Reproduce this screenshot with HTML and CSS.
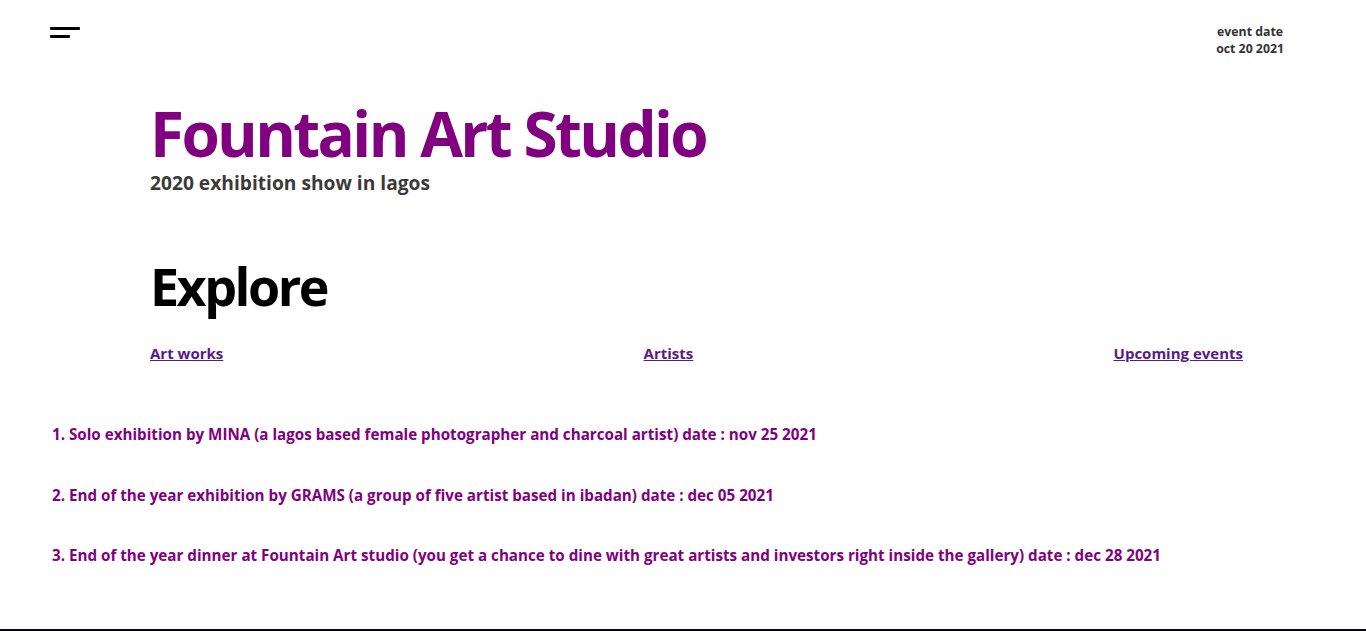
FILE: index.html
```html
<!DOCTYPE html>
<html lang="en">
<head>
<meta charset="utf-8">
<title>Fountain Art Studio</title>
<link rel="stylesheet" href="styles.css">
</head>
<body>
<header class="topbar">
  <button class="menu" aria-label="menu">
    <span class="bar bar-long"></span>
    <span class="bar bar-short"></span>
  </button>
  <div class="event-date">
    <div>event date</div>
    <div>oct 20 2021</div>
  </div>
</header>
<section class="hero">
  <h1 class="title">Fountain Art Studio</h1>
  <p class="subtitle">2020 exhibition show in lagos</p>
</section>
<section class="explore">
  <h2 class="explore-title">Explore</h2>
  <nav class="explore-links">
    <a href="#">Art works</a>
    <a href="#">Artists</a>
    <a href="#">Upcoming events</a>
  </nav>
</section>
<section class="events">
  <p class="event">1. Solo exhibition by MINA (a lagos based female photographer and charcoal artist) date : nov 25 2021</p>
  <p class="event">2. End of the year exhibition by GRAMS (a group of five artist based in ibadan) date : dec 05 2021</p>
  <p class="event">3. End of the year dinner at Fountain Art studio (you get a chance to dine with great artists and investors right inside the gallery) date : dec 28 2021</p>
</section>
<footer class="gallery-strip"></footer>
</body>
</html>
```
FILE: styles.css
```css
* { box-sizing: border-box; }
body {
  margin: 0;
  font-family: "Open Sans", "Noto Sans", sans-serif;
  font-weight: 700;
  background: #fff;
}
.topbar {
  display: flex;
  justify-content: space-between;
  align-items: flex-start;
  padding: 27px 82px 0 50px;
  height: 95px;
}
.menu {
  display: flex;
  flex-direction: column;
  gap: 5px;
  padding: 0;
  border: 0;
  background: none;
}
.bar { display: block; height: 3px; background: #000; border-radius: 1px; }
.bar-long { width: 30px; }
.bar-short { width: 20px; }
.event-date {
  font-size: 12.3px;
  line-height: 17px;
  color: #333;
  text-align: center;
  margin-top: -4px;
}
.hero { padding-left: 150px; }
.title {
  margin: 0;
  font-size: 62px;
  line-height: 76px;
  letter-spacing: -2.65px;
  color: #800080;
  font-weight: 700;
}
.subtitle {
  margin: 0;
  font-size: 19.2px;
  line-height: 24px;
  color: #3a3a3a;
}
.explore { padding: 59px 123px 0 150px; }
.explore-title {
  margin: 0;
  font-size: 52px;
  line-height: 64px;
  letter-spacing: -2.5px;
  color: #000;
}
.explore-links {
  display: flex;
  justify-content: space-between;
  margin-top: 25px;
  font-size: 15px;
}
.explore-links a { color: #551a8b; }
.events { padding: 60px 52px 0; }
.event {
  margin: 0 0 38.5px;
  font-size: 15.2px;
  line-height: 22px;
  color: #800080;
}
.gallery-strip {
  height: 200px;
  margin-top: 63px;
  background: #0a0612;
}
```
